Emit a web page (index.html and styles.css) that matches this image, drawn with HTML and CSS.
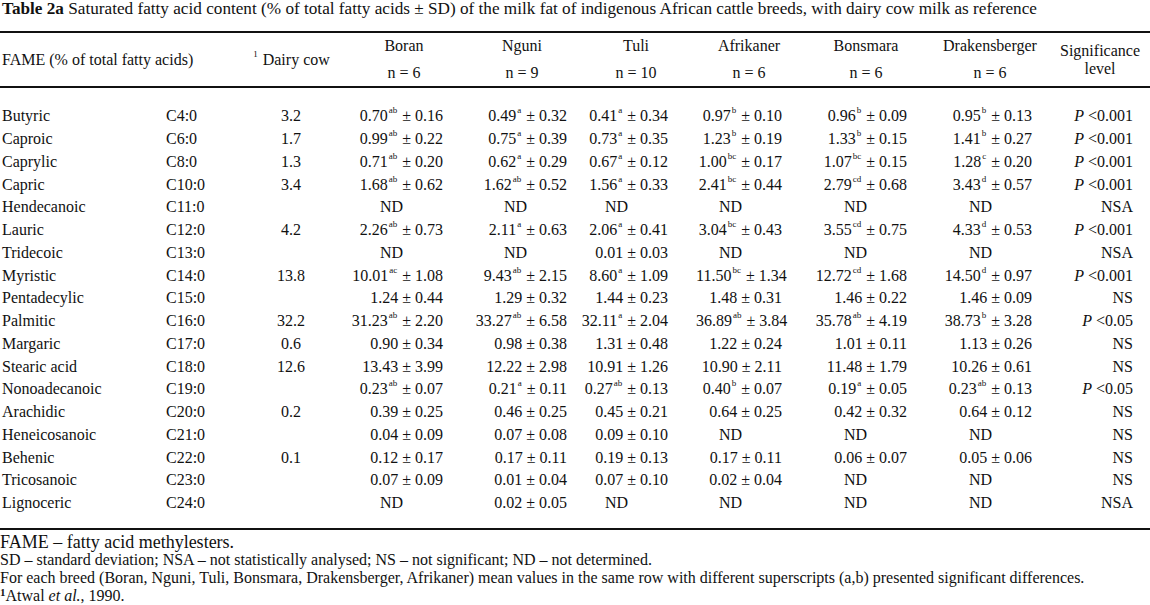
FILE: index.html
```html
<!DOCTYPE html>
<html>
<head>
<meta charset="utf-8">
<link rel="stylesheet" href="styles.css">
</head>
<body>
<div class="title"><b>Table 2a</b> Saturated fatty acid content (% of total fatty acids ± SD) of the milk fat of indigenous African cattle breeds, with dairy cow milk as reference</div>
<table class="ft">
<colgroup>
<col class="w-name"><col class="w-form"><col class="w-dairy"><col class="w-boran"><col class="w-nguni"><col class="w-tuli"><col class="w-afr"><col class="w-bons"><col class="w-drak"><col class="w-sig">
</colgroup>
<thead>
<tr class="h1">
<th colspan="2" rowspan="2" class="h-fame">FAME (% of total fatty acids)</th>
<th rowspan="2" class="h-dairy"><sup class="hs">1</sup> Dairy cow</th>
<th>Boran</th><th>Nguni</th><th>Tuli</th><th>Afrikaner</th><th>Bonsmara</th><th>Drakensberger</th>
<th rowspan="2" class="h-sig">Significance<br>level</th>
</tr>
<tr class="h2">
<th>n = 6</th><th>n = 9</th><th>n = 10</th><th>n = 6</th><th>n = 6</th><th>n = 6</th>
</tr>
</thead>
<tbody>
<tr><td>Butyric</td><td>C4:0</td><td>3.2</td><td>0.70<sup>ab</sup> ± 0.16</td><td>0.49<sup>a</sup> ± 0.32</td><td>0.41<sup>a</sup> ± 0.34</td><td>0.97<sup>b</sup> ± 0.10</td><td>0.96<sup>b</sup> ± 0.09</td><td>0.95<sup>b</sup> ± 0.13</td><td><i>P</i> &lt;0.001</td></tr>
<tr><td>Caproic</td><td>C6:0</td><td>1.7</td><td>0.99<sup>ab</sup> ± 0.22</td><td>0.75<sup>a</sup> ± 0.39</td><td>0.73<sup>a</sup> ± 0.35</td><td>1.23<sup>b</sup> ± 0.19</td><td>1.33<sup>b</sup> ± 0.15</td><td>1.41<sup>b</sup> ± 0.27</td><td><i>P</i> &lt;0.001</td></tr>
<tr><td>Caprylic</td><td>C8:0</td><td>1.3</td><td>0.71<sup>ab</sup> ± 0.20</td><td>0.62<sup>a</sup> ± 0.29</td><td>0.67<sup>a</sup> ± 0.12</td><td>1.00<sup>bc</sup> ± 0.17</td><td>1.07<sup>bc</sup> ± 0.15</td><td>1.28<sup>c</sup> ± 0.20</td><td><i>P</i> &lt;0.001</td></tr>
<tr><td>Capric</td><td>C10:0</td><td>3.4</td><td>1.68<sup>ab</sup> ± 0.62</td><td>1.62<sup>ab</sup> ± 0.52</td><td>1.56<sup>a</sup> ± 0.33</td><td>2.41<sup>bc</sup> ± 0.44</td><td>2.79<sup>cd</sup> ± 0.68</td><td>3.43<sup>d</sup> ± 0.57</td><td><i>P</i> &lt;0.001</td></tr>
<tr><td>Hendecanoic</td><td>C11:0</td><td></td><td><span class="nd">ND</span></td><td><span class="nd">ND</span></td><td><span class="nd">ND</span></td><td><span class="nd">ND</span></td><td><span class="nd">ND</span></td><td><span class="nd">ND</span></td><td>NSA</td></tr>
<tr><td>Lauric</td><td>C12:0</td><td>4.2</td><td>2.26<sup>ab</sup> ± 0.73</td><td>2.11<sup>a</sup> ± 0.63</td><td>2.06<sup>a</sup> ± 0.41</td><td>3.04<sup>bc</sup> ± 0.43</td><td>3.55<sup>cd</sup> ± 0.75</td><td>4.33<sup>d</sup> ± 0.53</td><td><i>P</i> &lt;0.001</td></tr>
<tr><td>Tridecoic</td><td>C13:0</td><td></td><td><span class="nd">ND</span></td><td><span class="nd">ND</span></td><td>0.01 ± 0.03</td><td><span class="nd">ND</span></td><td><span class="nd">ND</span></td><td><span class="nd">ND</span></td><td>NSA</td></tr>
<tr><td>Myristic</td><td>C14:0</td><td>13.8</td><td>10.01<sup>ac</sup> ± 1.08</td><td>9.43<sup>ab</sup> ± 2.15</td><td>8.60<sup>a</sup> ± 1.09</td><td>11.50<sup>bc</sup> ± 1.34</td><td>12.72<sup>cd</sup> ± 1.68</td><td>14.50<sup>d</sup> ± 0.97</td><td><i>P</i> &lt;0.001</td></tr>
<tr><td>Pentadecylic</td><td>C15:0</td><td></td><td>1.24 ± 0.44</td><td>1.29 ± 0.32</td><td>1.44 ± 0.23</td><td>1.48 ± 0.31</td><td>1.46 ± 0.22</td><td>1.46 ± 0.09</td><td>NS</td></tr>
<tr><td>Palmitic</td><td>C16:0</td><td>32.2</td><td>31.23<sup>ab</sup> ± 2.20</td><td>33.27<sup>ab</sup> ± 6.58</td><td>32.11<sup>a</sup> ± 2.04</td><td>36.89<sup>ab</sup> ± 3.84</td><td>35.78<sup>ab</sup> ± 4.19</td><td>38.73<sup>b</sup> ± 3.28</td><td><i>P</i> &lt;0.05</td></tr>
<tr><td>Margaric</td><td>C17:0</td><td>0.6</td><td>0.90 ± 0.34</td><td>0.98 ± 0.38</td><td>1.31 ± 0.48</td><td>1.22 ± 0.24</td><td>1.01 ± 0.11</td><td>1.13 ± 0.26</td><td>NS</td></tr>
<tr><td>Stearic acid</td><td>C18:0</td><td>12.6</td><td>13.43 ± 3.99</td><td>12.22 ± 2.98</td><td>10.91 ± 1.26</td><td>10.90 ± 2.11</td><td>11.48 ± 1.79</td><td>10.26 ± 0.61</td><td>NS</td></tr>
<tr><td>Nonoadecanoic</td><td>C19:0</td><td></td><td>0.23<sup>ab</sup> ± 0.07</td><td>0.21<sup>a</sup> ± 0.11</td><td>0.27<sup>ab</sup> ± 0.13</td><td>0.40<sup>b</sup> ± 0.07</td><td>0.19<sup>a</sup> ± 0.05</td><td>0.23<sup>ab</sup> ± 0.13</td><td><i>P</i> &lt;0.05</td></tr>
<tr><td>Arachidic</td><td>C20:0</td><td>0.2</td><td>0.39 ± 0.25</td><td>0.46 ± 0.25</td><td>0.45 ± 0.21</td><td>0.64 ± 0.25</td><td>0.42 ± 0.32</td><td>0.64 ± 0.12</td><td>NS</td></tr>
<tr><td>Heneicosanoic</td><td>C21:0</td><td></td><td>0.04 ± 0.09</td><td>0.07 ± 0.08</td><td>0.09 ± 0.10</td><td><span class="nd">ND</span></td><td><span class="nd">ND</span></td><td><span class="nd">ND</span></td><td>NS</td></tr>
<tr><td>Behenic</td><td>C22:0</td><td>0.1</td><td>0.12 ± 0.17</td><td>0.17 ± 0.11</td><td>0.19 ± 0.13</td><td>0.17 ± 0.11</td><td>0.06 ± 0.07</td><td>0.05 ± 0.06</td><td>NS</td></tr>
<tr><td>Tricosanoic</td><td>C23:0</td><td></td><td>0.07 ± 0.09</td><td>0.01 ± 0.04</td><td>0.07 ± 0.10</td><td>0.02 ± 0.04</td><td><span class="nd">ND</span></td><td><span class="nd">ND</span></td><td>NS</td></tr>
<tr><td>Lignoceric</td><td>C24:0</td><td></td><td><span class="nd">ND</span></td><td>0.02 ± 0.05</td><td><span class="nd">ND</span></td><td><span class="nd">ND</span></td><td><span class="nd">ND</span></td><td><span class="nd">ND</span></td><td>NSA</td></tr>
</tbody>
</table>
<div class="notes">
<div class="n1">FAME – fatty acid methylesters.</div>
<div>SD – standard deviation; NSA – not statistically analysed; NS – not significant; ND – not determined.</div>
<div>For each breed (Boran, Nguni, Tuli, Bonsmara, Drakensberger, Afrikaner) mean values in the same row with different superscripts (a,b) presented significant differences.</div>
<div><sup class="fs">1</sup>Atwal <i>et al.</i>, 1990.</div>
</div>
</body>
</html>
```

FILE: styles.css
```css
html, body {
  margin: 0;
  padding: 0;
  background: #fff;
}
body {
  font-family: "Liberation Serif", "Times New Roman", serif;
  color: #111;
  width: 1150px;
}
.title {
  font-size: 17.2px;
  line-height: 18px;
  padding-left: 2px;
}
.ft {
  margin-top: 13px;
  width: 1150px;
  border-collapse: collapse;
  table-layout: fixed;
  font-size: 16px;
  border-top: 2px solid #111;
  border-bottom: 2px solid #111;
}
.w-name { width: 160px; }
.w-form { width: 90px; }
.w-dairy { width: 90px; }
.w-boran { width: 128px; }
.w-nguni { width: 108px; }
.w-tuli { width: 120px; }
.w-afr { width: 106px; }
.w-bons { width: 128px; }
.w-drak { width: 120px; }
.w-sig { width: 100px; }

.ft thead {
  border-bottom: 2px solid #111;
}
.ft th {
  font-weight: normal;
  text-align: center;
  padding: 0;
  white-space: nowrap;
}
.ft .h1 th { height: 26px; }
.ft .h2 th { height: 27px; }
.ft th.h-fame {
  text-align: left;
  padding-left: 2px;
}
.ft th.h-dairy { padding-right: 8px; }
.ft th.h-sig { line-height: 18px; }
.hs {
  font-size: 10px;
  line-height: 0;
  vertical-align: 5px;
}

.ft td {
  padding: 0;
  height: 22.75px;
  line-height: 22px;
  white-space: nowrap;
  text-align: right;
}
.ft tbody tr:first-child td { padding-top: 17px; }
.ft tbody tr:last-child td { padding-bottom: 13px; }
.ft td:nth-child(1) { text-align: left; padding-left: 2px; }
.ft td:nth-child(2) { text-align: left; padding-left: 6px; }
.ft td:nth-child(3) { text-align: center; padding-right: 8px; }
.ft td:nth-child(4) { padding-right: 25px; }
.ft td:nth-child(5) { padding-right: 9px; }
.ft td:nth-child(6) { padding-right: 28px; }
.ft td:nth-child(7) { padding-right: 20px; }
.ft td:nth-child(8) { padding-right: 23px; }
.ft td:nth-child(9) { padding-right: 18px; }
.ft td:nth-child(10) { padding-right: 17px; }
.ft sup {
  font-size: 9px;
  line-height: 0;
  vertical-align: 8px;
  margin-left: 1px;
  margin-right: 1px;
}
.nd {
  display: inline-block;
  margin-right: 40px;
}

.notes {
  margin-top: 3px;
  font-size: 16px;
  line-height: 18px;
}
.notes .n1 { font-size: 18px; }
.fs {
  font-weight: bold;
  font-size: 11px;
  line-height: 0;
  vertical-align: 5px;
}
```
